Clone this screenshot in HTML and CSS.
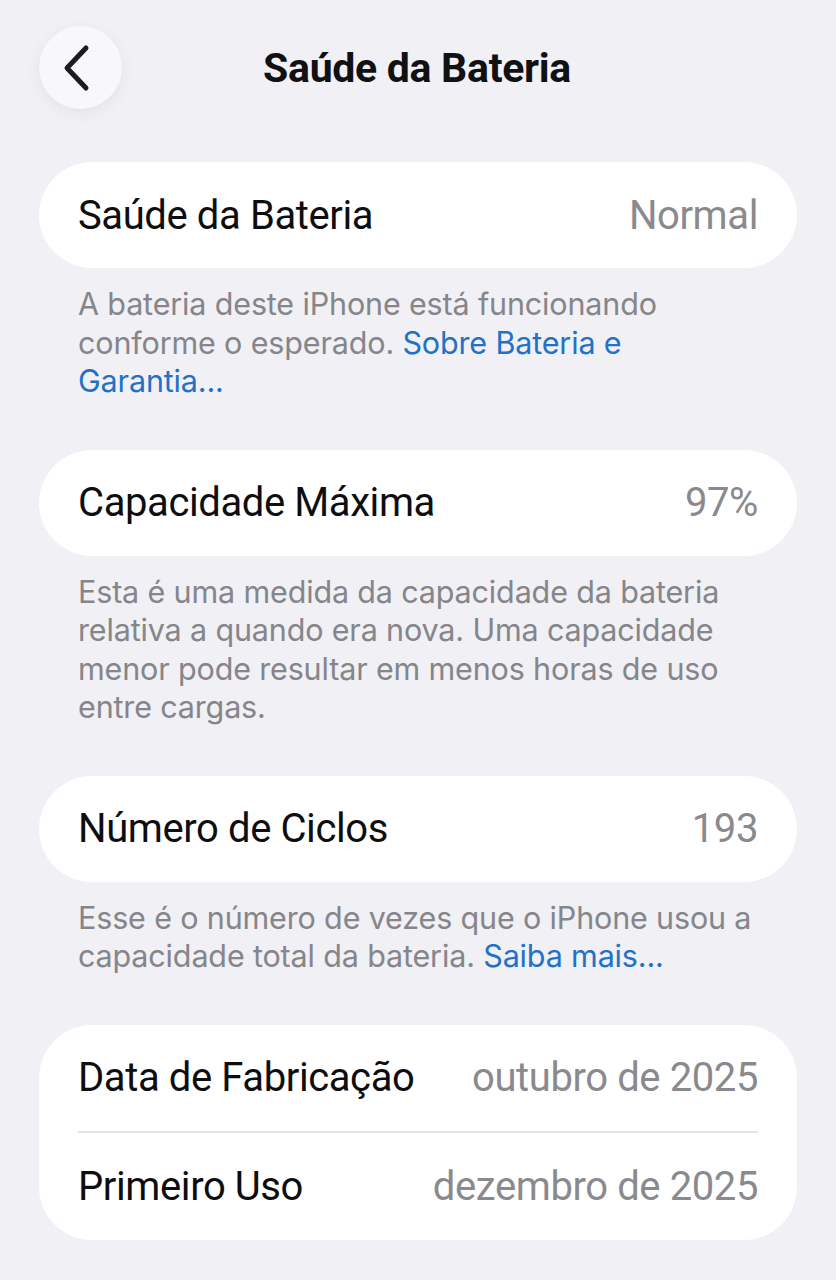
FILE: index.html
```html
<!DOCTYPE html>
<html lang="pt-BR">
<head>
<meta charset="utf-8">
<link rel="stylesheet" href="styles.css">
</head>
<body>
<div class="screen">
  <header class="nav">
    <button class="back" aria-label="Voltar">
      <svg width="34" height="50" viewBox="0 0 34 50"><path d="M24 5 L5 25 L24 45" fill="none" stroke="#1c1c1e" stroke-width="5" stroke-linecap="round" stroke-linejoin="round"/></svg>
    </button>
    <h1 class="title">Saúde da Bateria</h1>
  </header>

  <section class="card">
    <div class="row"><span class="label">Saúde da Bateria</span><span class="value">Normal</span></div>
  </section>
  <p class="footer">A bateria deste iPhone está funcionando conforme o esperado. <span class="link">Sobre Bateria e Garantia...</span></p>

  <section class="card">
    <div class="row"><span class="label">Capacidade Máxima</span><span class="value">97%</span></div>
  </section>
  <p class="footer">Esta é uma medida da capacidade da bateria relativa a quando era nova. Uma capacidade menor pode resultar em menos horas de uso entre cargas.</p>

  <section class="card">
    <div class="row"><span class="label">Número de Ciclos</span><span class="value">193</span></div>
  </section>
  <p class="footer">Esse é o número de vezes que o iPhone usou a capacidade total da bateria. <span class="link">Saiba mais...</span></p>

  <section class="card">
    <div class="row"><span class="label">Data de Fabricação</span><span class="value">outubro de 2025</span></div>
    <div class="row sep"><span class="label">Primeiro Uso</span><span class="value">dezembro de 2025</span></div>
  </section>
</div>
</body>
</html>
```

FILE: styles.css
```css
html, body {
  margin: 0;
  padding: 0;
  background: #f0f0f5;
}
body {
  font-family: Roboto, "Noto Sans", sans-serif;
  color: #111113;
  width: 836px;
  height: 1280px;
  overflow: hidden;
}
.screen {
  padding: 26px 39px 0 39px;
}
.nav {
  display: flex;
  align-items: center;
  height: 83px;
  position: relative;
  margin-bottom: 53px;
}
.back {
  width: 83px;
  height: 83px;
  border-radius: 50%;
  border: none;
  background: #f8f8fa;
  box-shadow: 0 4px 16px rgba(0,0,0,0.06);
  display: flex;
  align-items: center;
  justify-content: center;
  padding: 0 4px 0 0;
  flex: none;
}
.title {
  position: absolute;
  left: 0;
  right: 0;
  text-align: center;
  margin: 0;
  font-size: 41px;
  font-weight: 700;
  letter-spacing: -0.3px;
  pointer-events: none;
  padding-right: 2px;
}
.card {
  background: #ffffff;
  border-radius: 53px;
  padding: 0 39px;
}
.row {
  height: 106px;
  display: flex;
  align-items: center;
  justify-content: space-between;
  font-size: 40px;
  letter-spacing: -0.4px;
}
.row.sep {
  border-top: 2px solid #e4e4e8;
  height: 107px;
}
.label {
  color: #0e0e10;
}
.value {
  color: #8a8a8e;
}
.footer {
  margin: 0;
  padding: 17px 26px 49px 39px;
  font-family: Inter, Roboto, sans-serif;
  font-size: 30.5px;
  line-height: 38.5px;
  color: #85858a;
  letter-spacing: -0.15px;
}
.link {
  color: #1f72c8;
}
```
